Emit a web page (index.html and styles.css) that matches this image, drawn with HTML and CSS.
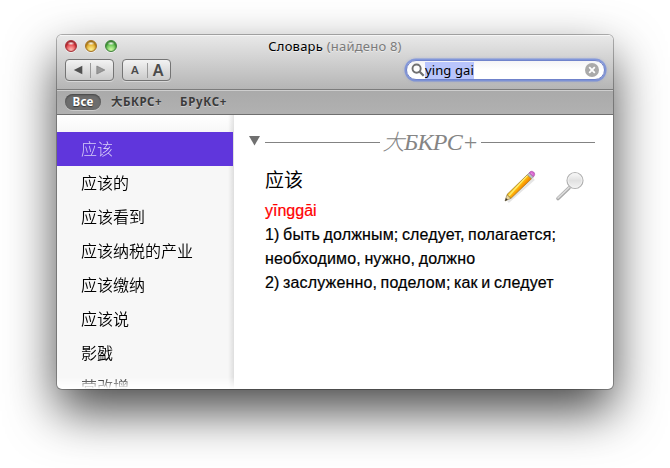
FILE: index.html
```html
<!DOCTYPE html>
<html lang="ru">
<head>
<meta charset="utf-8">
<title>Словарь</title>
<link rel="stylesheet" href="styles.css">
</head>
<body>
<div class="window">
  <header class="toolbar">
    <div class="titlebar">
      <div class="lights"><i class="light red"></i><i class="light yellow"></i><i class="light green"></i></div>
      <div class="title">Словарь <span>(найдено 8)</span></div>
    </div>
    <div class="controls">
      <div class="segmented">
        <div class="segment"><svg width="10" height="10" viewBox="0 0 10 10"><path d="M9.300.7v8.600L.8 5z" fill="#505050"/></svg></div>
        <div class="segment"><svg width="10" height="10" viewBox="0 0 10 10"><path d="M.8 1v8l8-4z" fill="#999" stroke="#7c7c7c" stroke-width=".7"/></svg></div>
      </div>
      <div class="segmented font-size">
        <div class="segment small-a">A</div>
        <div class="segment large-a">A</div>
      </div>
      <div class="search">
        <svg width="14" height="14" viewBox="0 0 14 14" fill="none" stroke="#707070"><circle cx="5.6" cy="5.6" r="4.1" stroke-width="1.9"/><path d="M8.7 8.7l4 4" stroke-width="2.3"/></svg>
        <span class="query">ying gai</span>
        <svg class="clear" width="14" height="14" viewBox="0 0 14 14"><circle cx="7" cy="7" r="7" fill="#aaa"/><path d="M4.2 4.2l5.6 5.6M9.8 4.2l-5.6 5.6" stroke="#fff" stroke-width="1.8"/></svg>
      </div>
    </div>
  </header>
  <nav class="filters">
    <span class="filter active">Все</span>
    <span class="filter bkrs">大БКРС+</span>
    <span class="filter bruks">БРуКС+</span>
  </nav>
  <main class="content">
    <ul class="words">
      <li class="selected">应该</li>
      <li>应该的</li>
      <li>应该看到</li>
      <li>应该纳税的产业</li>
      <li>应该缴纳</li>
      <li>应该说</li>
      <li>影戤</li>
      <li>营改增</li>
    </ul>
    <article class="entry">
      <div class="source">
        <svg width="11" height="10" viewBox="0 0 11 10"><path d="M0 0h11L5.5 9.5z" fill="#707070"/></svg>
        <i class="rule"></i><h2><span>大</span>БКРС+</h2><i class="rule"></i>
      </div>
      <div class="heading">
        <h1>应该</h1>
        <svg class="pencil" width="34" height="34" viewBox="0 0 34 34">
          <defs><linearGradient id="wood" gradientUnits="userSpaceOnUse" x1="14" y1="15.500" x2="18.200" y2="19.300"><stop offset="0" stop-color="#f5bd13"/><stop offset=".3" stop-color="#fff27a"/><stop offset=".5" stop-color="#ffb60a"/><stop offset="1" stop-color="#f58a00"/></linearGradient></defs>
          <path d="M5 33L31 10" stroke="#000" stroke-opacity=".1" stroke-width="2.500"/>
          <path d="M2 32l2-6.500 4 3.800z" fill="#ead69a" stroke="#8a7440" stroke-width=".6"/>
          <path d="M2 32l.9-3 1.900 1.700z" fill="#333"/>
          <path d="M4 25.500L24.300 5.700l4.300 4L8 29.300z" fill="url(#wood)" stroke="#98731c" stroke-width=".7"/>
          <path d="M24.300 5.700l1.900-1.900 4.300 4-1.900 1.900z" fill="#bfc1c3" stroke="#85878a" stroke-width=".6"/>
          <path d="M26.200 3.800c1-1.700 2.900-2 4.400-.8 1.500 1.300 1.400 3.200-.1 4.800z" fill="#d664cf" stroke="#a644a3" stroke-width=".6"/>
          <path d="M28.200 4l1.500 1.300" stroke="#f0a3eb"/>
        </svg>
        <svg class="lens" width="32" height="32" viewBox="0 0 32 32">
          <defs><linearGradient id="glass" x1="0" y1="0" x2="0" y2="1"><stop offset="0" stop-color="#fafafa"/><stop offset=".5" stop-color="#e1e1e1"/><stop offset="1" stop-color="#f3f3f3"/></linearGradient></defs>
          <path d="M3 28.5L14 18" stroke="#aaa" stroke-width="3.6" stroke-linecap="round"/>
          <path d="M3 28L14 17.500" stroke="#ddd" stroke-width="1.7" stroke-linecap="round"/>
          <circle cx="20" cy="10.500" r="8" fill="url(#glass)" stroke="#b2b2b2" stroke-width="1.2"/>
          <circle cx="20" cy="10.500" r="6.900" fill="none" stroke="#f2f2f2" stroke-width=".8"/>
        </svg>
      </div>
      <p class="pinyin">yīnggāi</p>
      <p>1) быть должным; следует, полагается;</p>
      <p>необходимо, нужно, должно</p>
      <p>2) заслуженно, поделом; как и следует</p>
    </article>
  </main>
</div>
</body>
</html>
```
FILE: styles.css
```css
* { box-sizing: border-box; }
body {
  margin: 0;
  height: 468px;
  overflow: hidden;
  background: #fff;
  padding: 35px 57px;
  font-family: "Noto Sans", "Noto Sans CJK SC", sans-serif;
}
.window {
  width: 556px;
  height: 354px;
  border-radius: 5px;
  background: #fff;
  overflow: hidden;
  display: flex;
  flex-direction: column;
  box-shadow: 0 0 0 1px rgba(0,0,0,.28), 0 22px 50px rgba(0,0,0,.72);
}
.toolbar {
  height: 55px;
  flex: none;
  background: linear-gradient(#e8e8e8, #b5b5b5);
  border-top: 1px solid #f6f6f6;
  border-bottom: 1px solid #7c7c7c;
}
.titlebar {
  display: grid;
  grid-template-columns: 1fr;
  height: 22px;
  align-items: center;
}
.lights, .title { grid-area: 1 / 1; }
.lights { display: flex; gap: 8px; padding: 0 0 2px 8px; }
.light {
  width: 12px;
  height: 12px;
  border-radius: 50%;
  box-shadow: inset 0 1px 2px rgba(0,0,0,.5), 0 1px 0 rgba(255,255,255,.5);
}
.red { background: radial-gradient(ellipse 4px 2px at 50% 23%, #fff, transparent), radial-gradient(circle at 50% 90%, #ffc0b8, #e5343d 65%); border: 1px solid #a52d34; }
.yellow { background: radial-gradient(ellipse 4px 2px at 50% 23%, #fff, transparent), radial-gradient(circle at 50% 90%, #fff69a, #e3a51f 65%); border: 1px solid #a56f20; }
.green { background: radial-gradient(ellipse 4px 2px at 50% 23%, #fff, transparent), radial-gradient(circle at 50% 90%, #d5ffab, #53bb45 65%); border: 1px solid #3d8139; }
.title {
  text-align: center;
  font-size: 13px;
  letter-spacing: .22px;
  line-height: 20px;
  padding-bottom: 2px;
  color: #000;
  white-space: nowrap;
  text-shadow: 0 1px 0 rgba(255,255,255,.5);
}
.title span { color: #7b7b7b; }
.controls { display: flex; padding: 1px 7px 0 8px; align-items: flex-start; }
.segmented {
  display: flex;
  width: 49px;
  height: 22px;
  border: 1px solid #747474;
  border-radius: 4px;
  background: linear-gradient(#f3f3f3, #cacaca);
  box-shadow: 0 1px 0 rgba(255,255,255,.4);
}
.segment { flex: 1; display: flex; align-items: center; justify-content: center; }
.segment + .segment { background: linear-gradient(#999, #999) 0 50% / 1px 15px no-repeat; }
.font-size { margin-left: 8px; color: #4b4b4b; font-weight: 600; line-height: 1; }
.small-a { font-size: 11.5px; }
.large-a { font-size: 16px; }
.search {
  display: flex;
  align-items: center;
  width: 199px;
  height: 20px;
  margin: 1px 1px 0 auto;
  padding: 0 5px 0 4px;
  border: 1px solid #7083cb;
  border-radius: 10px;
  background: linear-gradient(#f4f4f6, #fff 50%);
  box-shadow: 0 0 0 1.5px rgba(105,132,221,.65), 0 0 3px 1px rgba(105,132,221,.5);
}
.query {
  font-size: 13px;
  letter-spacing: .1px;
  line-height: 17px;
  background: #b9c5fc;
  color: #000;
  white-space: nowrap;
}
.clear { margin-left: auto; }
.filters {
  height: 25px;
  flex: none;
  display: flex;
  align-items: center;
  padding: 0 8px 1px;
  border-top: 1px solid #cecece;
  border-bottom: 1px solid #6f6f6f;
  background: linear-gradient(#aaa, #b1b1b1);
  font-size: 11.5px;
  font-weight: 700;
  letter-spacing: .5px;
  line-height: 16px;
  color: #3b3b3b;
  text-shadow: 0 1px 0 rgba(255,255,255,.35);
  white-space: nowrap;
}
.active {
  width: 36px;
  height: 16px;
  border-radius: 8px;
  text-align: center;
  letter-spacing: .2px;
  color: #fff;
  background: #6d6d6d;
  box-shadow: inset 0 1px 2px #444, 0 1px 0 #ccc;
  text-shadow: 0 1px 1px #333;
}
.bkrs { margin-left: 10px; width: 52px; }
.bruks { margin-left: 17px; letter-spacing: .7px; }
.content { flex: 1; min-height: 0; display: flex; }
.words {
  width: 177px;
  flex: none;
  margin: 0;
  padding: 17px 0 0;
  list-style: none;
  overflow: hidden;
  background: linear-gradient(90deg, transparent 171px, rgba(0,0,0,.1)), linear-gradient(#fff, #f7f7f7 18px);
  font-family: "Noto Sans CJK SC", sans-serif;
  font-weight: 350;
  font-size: 16px;
  line-height: 32px;
  color: #000;
  -webkit-mask-image: linear-gradient(#000 262px, transparent 274px);
  mask-image: linear-gradient(#000 262px, transparent 274px);
}
.words li { height: 34px; padding-left: 24px; }
.words .selected { background: #6036dc; color: #d8cff8; font-weight: 300; margin-right: 1px; }
.entry { flex: 1; padding: 12px 18px 0 15px; }
.source { display: flex; align-items: center; height: 31px; }
.source svg { margin-right: 5px; margin-top: -3px; }
.rule { height: 1px; flex: 1; background: #838383; }
.source h2 {
  margin: 0 4px 0 3px;
  width: 94px;
  font: italic 24px/31px "Liberation Serif", "Noto Sans CJK SC", serif;
  color: #858585;
  letter-spacing: -.6px;
  white-space: nowrap;
}
.source h2 span { font-size: 22px; font-weight: 300; }
.heading { display: flex; height: 41px; padding: 9px 8px 0 16px; }
.heading h1 {
  margin: -2px 0 0;
  flex: 1;
  font: 400 19px/28px "Noto Sans CJK SC", sans-serif;
}
.pencil { margin: 2px 18px 0 0; flex: none; }
.lens { margin-top: 3px; flex: none; }
.entry p {
  margin: 0 0 0 16px;
  font: 16px/24px "Liberation Sans", Arial, sans-serif;
  letter-spacing: .14px;
  word-spacing: -1px;
  -webkit-text-stroke: .2px currentColor;
  color: #000;
  white-space: nowrap;
}
.entry .pinyin { color: #f00; letter-spacing: 0; }
```
